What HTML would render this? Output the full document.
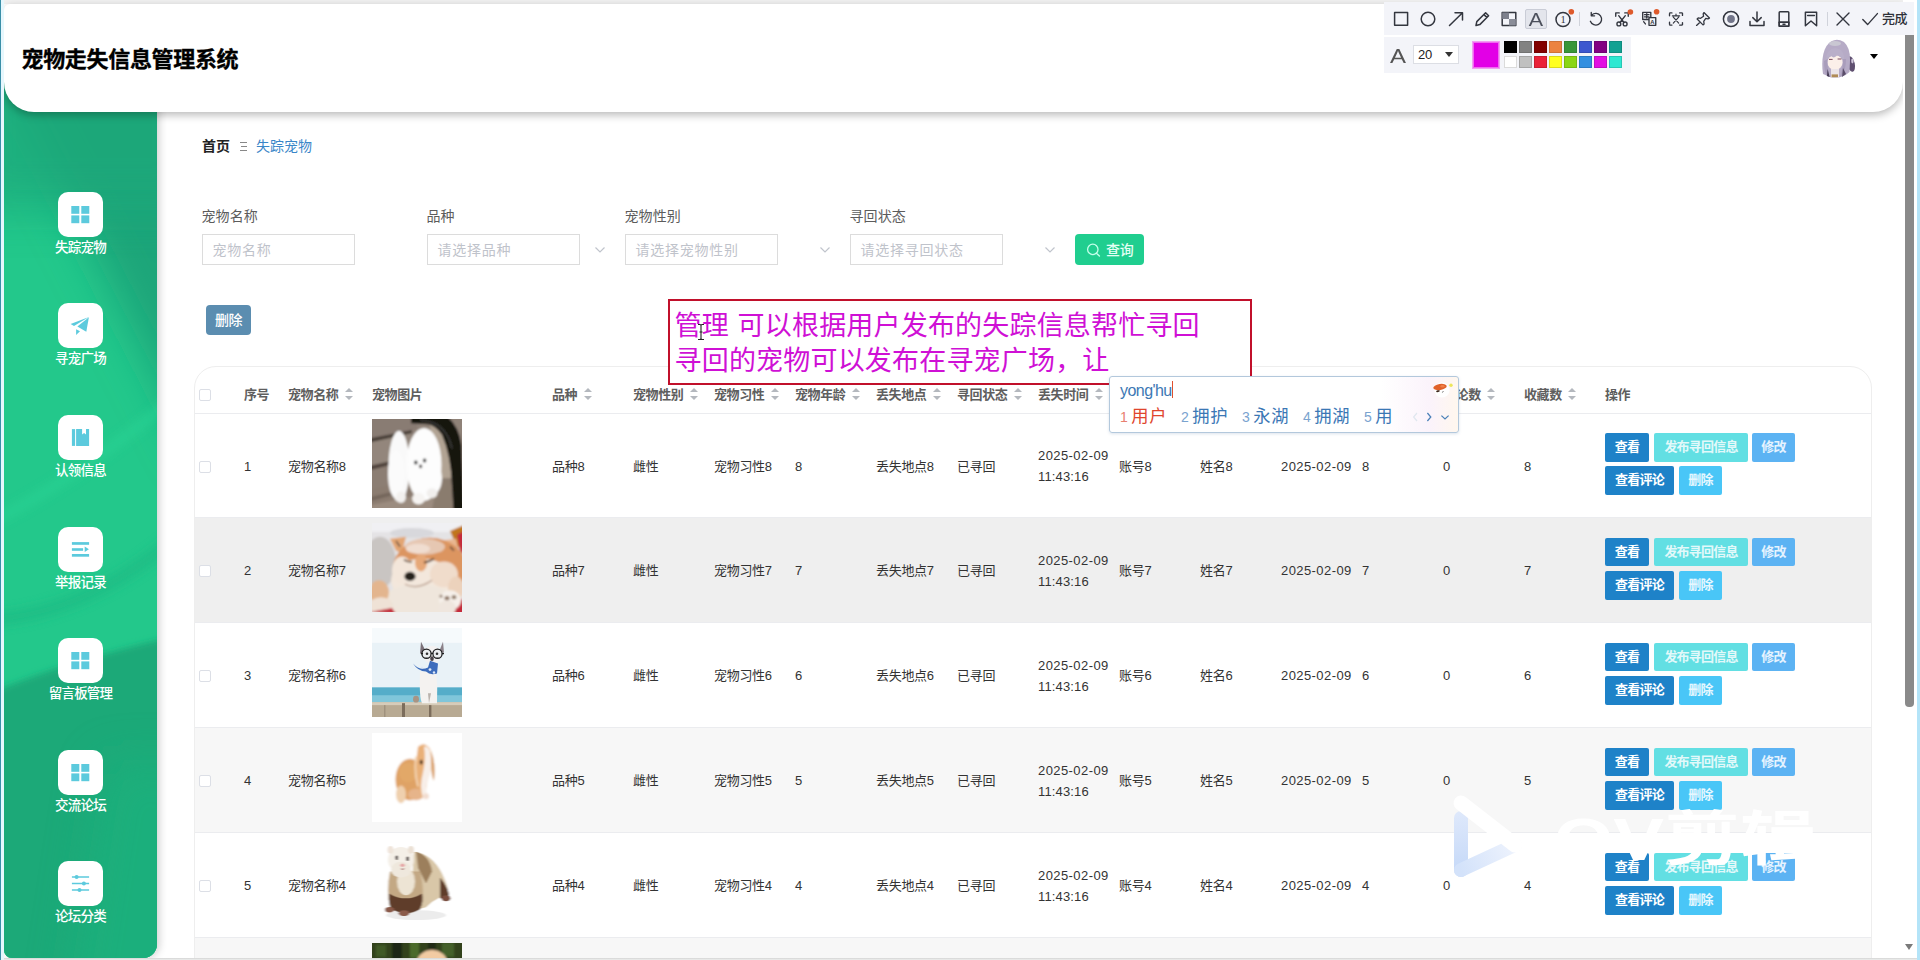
<!DOCTYPE html><html lang="zh-CN"><head><meta charset="utf-8"><title>宠物走失信息管理系统</title><style>
*{box-sizing:border-box;margin:0;padding:0}
html,body{width:1920px;height:960px;overflow:hidden;background:#fff}
body{position:relative;font-family:"Liberation Sans","Noto Sans CJK SC",sans-serif;font-size:13px;color:#333}
.abs{position:absolute}
#edgeL{left:0;top:0;width:1px;height:960px;background:#3a8fa8}
#edgeL2{left:1px;top:0;width:3px;height:960px;background:#e6f7fd}
#edgeT{left:0;top:0;width:1920px;height:4px;background:#f1f1f1}
#edgeR{left:1917px;top:0;width:3px;height:960px;background:#b4e4f8}
#edgeB{left:0;top:958px;width:1920px;height:2px;background:linear-gradient(#d4d4d4,#eef0ef)}
#side{left:4px;top:60px;width:153px;height:898px;border-radius:0 0 14px 8px;overflow:hidden;background:#22c68a}
#sideSh{left:4px;top:60px;width:153px;height:898px;border-radius:0 0 14px 8px;box-shadow:2px 0 8px rgba(0,0,0,.2)}
#head{left:4px;top:4px;width:1899px;height:108px;background:#fff;border-radius:6px 0 30px 30px;box-shadow:0 3px 8px rgba(0,0,0,.28)}
#title{left:21.5px;top:45px;font-size:22px;font-weight:bold;color:#000;line-height:30px;white-space:nowrap;letter-spacing:-.32px;-webkit-text-stroke:.35px #000}
.mi{position:absolute;left:4px;width:153px;text-align:center;color:#fff;font-weight:500;font-size:13.5px;line-height:16px;white-space:nowrap;letter-spacing:-.8px;text-indent:-.8px}
.mi .ib{display:block;width:45px;height:45px;border-radius:10px;background:#fff;margin:0 auto 3px;position:relative}
.mi svg{position:absolute;left:0;top:0}
#bc{left:202px;top:137px;font-size:14px;line-height:18px;white-space:nowrap}
#bc b{color:#222;font-weight:bold}
#bc .sep{display:inline-block;width:7px;height:9px;margin:0 9px 0 10px;border-top:1px solid #888;border-bottom:1px solid #888;position:relative;vertical-align:0}#bc .sep:after{content:"";position:absolute;left:1px;right:0;top:3px;border-top:1px solid #888}
#bc .cur{color:#3a86c8}
.fl{position:absolute;font-size:14px;color:#5c5c5c;line-height:18px;white-space:nowrap;letter-spacing:.1px;margin-left:-.5px}
.fi{position:absolute;top:234px;width:153px;height:31px;border:1px solid #dcdcdc;background:#fff;font-size:14px;color:#bfc3cb;line-height:31px;padding-left:9.5px;letter-spacing:.75px;white-space:nowrap}
.car{position:absolute;top:244px;width:12px;height:12px}
#qbtn{left:1075px;top:234px;width:69px;height:31px;border-radius:4px;background:#20ce8f;color:#e4fff4;font-size:14px;line-height:32px;white-space:nowrap;font-weight:500;letter-spacing:-.3px}
#del{left:206px;top:305px;width:45px;height:30px;border-radius:4px;background:#5b8db0;color:#fff;font-size:14px;font-weight:500;line-height:30px;text-align:center;letter-spacing:-.5px}
#tbl{left:194px;top:366px;width:1678px;height:600px;border:1px solid #eee;border-radius:22px 22px 0 0;overflow:hidden;background:#fff}
.row{position:absolute;left:0;width:1678px}
.c{position:absolute;white-space:nowrap;font-size:13px;line-height:22px;color:#333;letter-spacing:-.3px}
.h{font-weight:bold;color:#5e5e5e;letter-spacing:-.4px;margin-top:.6px}
.cb{position:absolute;left:4px;width:12px;height:12px;border:1px solid #dcdfe6;background:#fff;border-radius:2px}
.srt{display:inline-block;position:relative;width:8px;height:14px;vertical-align:-3.6px;margin-left:6.5px}
.srt:before{content:"";position:absolute;left:0;top:.3px;border:4.3px solid transparent;border-bottom:4.2px solid #b4b8be;border-top:0}
.srt:after{content:"";position:absolute;left:0;top:8.3px;border:4.3px solid transparent;border-top:4.2px solid #b4b8be;border-bottom:0}
.btn{position:absolute;height:28.7px;line-height:28.7px;color:#fff;font-size:13px;text-align:center;border-radius:2px;white-space:nowrap;letter-spacing:-.8px;font-weight:bold}
.b1{background:#1e82c8}.b2{background:#62dfe3;color:#e2f9fa}.b3{background:#5cb3f3;color:#e6f3ff}.b4{background:#49c6f7;color:#e6f8ff}
.d{letter-spacing:.42px}.t{letter-spacing:.15px}
</style></head><body>
<div id="edgeT" class="abs"></div>
<div id="sideSh" class="abs"></div><div id="side" class="abs"><svg width="153" height="898" viewBox="0 0 153 898" preserveAspectRatio="none" style="display:block"><defs><filter id="sb1" x="-30%" y="-30%" width="160%" height="160%"><feGaussianBlur stdDeviation="22"/></filter><filter id="sb2" x="-30%" y="-30%" width="160%" height="160%"><feGaussianBlur stdDeviation="5"/></filter><filter id="sb3" x="-30%" y="-30%" width="160%" height="160%"><feGaussianBlur stdDeviation="3"/></filter></defs><rect width="153" height="898" fill="#23c88b"/><path d="M-40 -100 H200 V407 L-40 -59 Z" fill="#1ba579" filter="url(#sb1)"/><rect x="-40" y="-40" width="240" height="190" fill="#1ca87a" opacity=".75" filter="url(#sb1)"/><path d="M-30 470 Q60 430 180 330" stroke="#2ad596" stroke-width="10" fill="none" opacity=".55" filter="url(#sb2)"/><path d="M-30 560 Q80 560 180 470" stroke="#1fbb84" stroke-width="14" fill="none" opacity=".7" filter="url(#sb2)"/><path d="M-30 640 Q60 600 190 572 V960 H-30 Z" fill="#1ba978" filter="url(#sb3)"/><path d="M100 700 H200 V960 H60 Z" fill="#1fb47f" opacity=".6" filter="url(#sb1)"/></svg></div>
<div class="mi" style="top:192px"><span class="ib"><svg width="45" height="45" viewBox="0 0 45 45"><g fill="#5ccadd"><rect x="13.3" y="14" width="8" height="7.8"/><rect x="23.3" y="14" width="8" height="7.8"/><rect x="13.3" y="23.4" width="8" height="7.8"/><rect x="23.3" y="23.4" width="8" height="7.8"/></g></svg></span>失踪宠物</div>
<div class="mi" style="top:303px"><span class="ib"><svg width="45" height="45" viewBox="0 0 45 45"><g fill="#5ccadd"><path d="M12.6 21 L30.9 13.9 L16 22.9 Z"/><path d="M19.4 23.6 L30.9 14.2 L28.3 28.8 Z"/><path d="M18.1 26.2 L22 28.3 L18.1 31.9 Z"/></g></svg></span>寻宠广场</div>
<div class="mi" style="top:415px"><span class="ib"><svg width="45" height="45" viewBox="0 0 45 45"><g fill="#5ccadd"><path d="M13.9 14.1 h3.2 v16.8 h-3.2 z"/><path d="M18.1 14.1 h6 v5.3 l1.95 -1.4 l1.95 1.4 v-5.3 h3.1 v16.8 h-13 z"/></g></svg></span>认领信息</div>
<div class="mi" style="top:527px"><span class="ib"><svg width="45" height="45" viewBox="0 0 45 45"><g fill="#5ccadd"><rect x="13.9" y="15.1" width="17.2" height="2.7"/><rect x="13.9" y="21.2" width="11.2" height="2.6"/><path d="M26.7 19.4 L30.9 22.3 L26.7 25 z"/><rect x="13.9" y="27" width="17.2" height="2.7"/></g></svg></span>举报记录</div>
<div class="mi" style="top:638px"><span class="ib"><svg width="45" height="45" viewBox="0 0 45 45"><g fill="#5ccadd"><rect x="13.3" y="14" width="8" height="7.8"/><rect x="23.3" y="14" width="8" height="7.8"/><rect x="13.3" y="23.4" width="8" height="7.8"/><rect x="23.3" y="23.4" width="8" height="7.8"/></g></svg></span>留言板管理</div>
<div class="mi" style="top:750px"><span class="ib"><svg width="45" height="45" viewBox="0 0 45 45"><g fill="#5ccadd"><rect x="13.3" y="14" width="8" height="7.8"/><rect x="23.3" y="14" width="8" height="7.8"/><rect x="13.3" y="23.4" width="8" height="7.8"/><rect x="23.3" y="23.4" width="8" height="7.8"/></g></svg></span>交流论坛</div>
<div class="mi" style="top:861px"><span class="ib"><svg width="45" height="45" viewBox="0 0 45 45"><g stroke="#5ccadd" stroke-width="1.5" fill="#5ccadd"><path d="M13.9 15.9 H31.1 M13.9 22.4 H31.1 M13.9 28.9 H31.1"/><circle cx="18.6" cy="15.9" r="2" stroke="none"/><circle cx="25.9" cy="22.4" r="2" stroke="none"/><circle cx="21.5" cy="28.9" r="2" stroke="none"/></g></svg></span>论坛分类</div>
<div id="head" class="abs"></div><div id="title" class="abs">宠物走失信息管理系统</div>
<div id="bc" class="abs"><b>首页</b><span class="sep"></span><span class="cur">失踪宠物</span></div>
<div class="fl" style="left:202px;top:207px">宠物名称</div>
<div class="fi" style="left:202px">宠物名称</div>
<div class="fl" style="left:427px;top:207px">品种</div>
<div class="fi" style="left:427px">请选择品种</div>
<svg class="car" style="left:594px" viewBox="0 0 12 12"><path d="M1.5 3.5 L6 8 L10.5 3.5" fill="none" stroke="#c0c4cc" stroke-width="1.2"/></svg>
<div class="fl" style="left:625px;top:207px">宠物性别</div>
<div class="fi" style="left:625px">请选择宠物性别</div>
<svg class="car" style="left:819px" viewBox="0 0 12 12"><path d="M1.5 3.5 L6 8 L10.5 3.5" fill="none" stroke="#c0c4cc" stroke-width="1.2"/></svg>
<div class="fl" style="left:850px;top:207px">寻回状态</div>
<div class="fi" style="left:850px">请选择寻回状态</div>
<svg class="car" style="left:1044px" viewBox="0 0 12 12"><path d="M1.5 3.5 L6 8 L10.5 3.5" fill="none" stroke="#c0c4cc" stroke-width="1.2"/></svg>
<div id="qbtn" class="abs"><svg class="abs" style="left:11px;top:8px" width="15" height="15" viewBox="0 0 15 15"><circle cx="6.8" cy="7.4" r="5.2" fill="none" stroke="#c4ffea" stroke-width="1.3"/><path d="M10.4 11.2 L13.4 14" stroke="#c4ffea" stroke-width="1.4" stroke-linecap="round"/></svg><span class="abs" style="left:31px;top:0">查询</span></div>
<div id="del" class="abs">删除</div>
<div id="tbl" class="abs">
<div class="row" style="top:0;height:47px;border-bottom:1px solid #ebecef">
<span class="cb" style="top:22px"></span>
<span class="c h" style="left:49px;top:16px">序号</span>
<span class="c h" style="left:93px;top:16px">宠物名称<i class="srt"></i></span>
<span class="c h" style="left:177px;top:16px">宠物图片</span>
<span class="c h" style="left:357px;top:16px">品种<i class="srt"></i></span>
<span class="c h" style="left:438px;top:16px">宠物性别<i class="srt"></i></span>
<span class="c h" style="left:519px;top:16px">宠物习性<i class="srt"></i></span>
<span class="c h" style="left:600px;top:16px">宠物年龄<i class="srt"></i></span>
<span class="c h" style="left:681px;top:16px">丢失地点<i class="srt"></i></span>
<span class="c h" style="left:762px;top:16px">寻回状态<i class="srt"></i></span>
<span class="c h" style="left:843px;top:16px">丢失时间<i class="srt"></i></span>
<span class="c h" style="left:924px;top:16px">账号<i class="srt"></i></span>
<span class="c h" style="left:1005px;top:16px">姓名<i class="srt"></i></span>
<span class="c h" style="left:1086px;top:16px">寻回时间<i class="srt"></i></span>
<span class="c h" style="left:1167px;top:16px">点击<i class="srt"></i></span>
<span class="c h" style="left:1248px;top:16px">评论数<i class="srt"></i></span>
<span class="c h" style="left:1329px;top:16px">收藏数<i class="srt"></i></span>
<span class="c h" style="left:1410px;top:16px">操作</span>
</div>
<div class="row" style="top:47px;height:104px;background:#fff;border-bottom:1px solid #ebecef">
<span class="cb" style="top:46.5px"></span>
<span class="c" style="left:49px;top:41.5px">1</span>
<span class="c" style="left:93px;top:41.5px">宠物名称8</span>
<span class="c" style="left:357px;top:41.5px">品种8</span>
<span class="c" style="left:438px;top:41.5px">雌性</span>
<span class="c" style="left:519px;top:41.5px">宠物习性8</span>
<span class="c" style="left:600px;top:41.5px">8</span>
<span class="c" style="left:681px;top:41.5px">丢失地点8</span>
<span class="c" style="left:762px;top:41.5px">已寻回</span>
<span class="c" style="left:924px;top:41.5px">账号8</span>
<span class="c" style="left:1005px;top:41.5px">姓名8</span>
<span class="c" style="left:1086px;top:41.5px"><span class="d">2025-02-09</span></span>
<span class="c" style="left:1167px;top:41.5px">8</span>
<span class="c" style="left:1248px;top:41.5px">0</span>
<span class="c" style="left:1329px;top:41.5px">8</span>
<span class="c" style="left:843px;top:31.3px;line-height:21px"><span class="d">2025-02-09</span><br><span class="t">11:43:16</span></span>
<div class="abs" style="left:177px;top:5px;width:90px;height:90px;overflow:hidden"><svg width="90" height="89" viewBox="0 0 90 90" preserveAspectRatio="none" style="display:block"><defs><filter id="bl1" x="-5%" y="-5%" width="110%" height="110%"><feGaussianBlur stdDeviation="0.9"/></filter><clipPath id="cp1"><rect width="90" height="90"/></clipPath></defs><g clip-path="url(#cp1)"><g filter="url(#bl1)">
<rect x="-5" y="-5" width="100" height="100" fill="#8f8278"/>
<path d="M-5 -5 H45 V10 L-5 20 Z" fill="#897c73"/>
<path d="M-5 20 L40 11 V14.5 L-5 24.5 Z" fill="#4a3f39"/>
<path d="M-5 24.5 L40 14.5 L40 38 L-5 48 Z" fill="#93867b"/>
<path d="M-5 48 L30 40 V44 L-5 52.5 Z" fill="#51453e"/>
<path d="M-5 52.5 L30 44 L30 64 L-5 72 Z" fill="#8c7e73"/>
<path d="M-5 72 L30 64 L95 68 V95 H-5 Z" fill="#8b7c70"/>
<path d="M-5 80 L34 70 L36 73 L-5 84 Z" fill="#74665c"/>
<path d="M-5 88 L60 74 L95 80 V95 H-5Z" fill="#9b8c7f"/>
<path d="M58 6 L72 14 L80 40 L82 72 L66 72 Z" fill="#b1a393"/>
<path d="M66 60 L82 60 L84 92 L60 92 Z" fill="#8a7b6e"/>
<path d="M39 -2 L76 -2 Q87 8 89.5 26 L92 92 L81.5 92 L80 68 Q79 37 70 16 Q63 6 56 5.4 L39 4.4 Z" fill="#15130f"/>
<path d="M48 1.5 Q74 2 80 30" fill="none" stroke="#3c3c3a" stroke-width="1.6"/>
<ellipse cx="27" cy="48" rx="10.5" ry="36" fill="#f9f9f9"/>
<ellipse cx="24" cy="56" rx="8" ry="24" fill="#fbfbfb"/>
<ellipse cx="52" cy="46" rx="17.5" ry="37" fill="#fdfdfd"/>
<ellipse cx="55" cy="60" rx="15" ry="20" fill="#fdfdfd"/>
<ellipse cx="29" cy="79" rx="5" ry="6" fill="#f3f1ef"/>
<ellipse cx="46.5" cy="80.5" rx="6.4" ry="6" fill="#f6f4f2"/>
<ellipse cx="60" cy="75" rx="5.4" ry="5" fill="#f1efed"/>
<ellipse cx="43.8" cy="44" rx="1.7" ry="2.1" fill="#1e1e1e"/>
<ellipse cx="52.6" cy="42" rx="1.7" ry="2.1" fill="#1e1e1e"/>
<ellipse cx="48.6" cy="47.8" rx="1.5" ry="1.9" fill="#2a2222"/>
</g></g></svg></div>
<span class="btn b1" style="left:1410px;top:19.2px;width:44px">查看</span>
<span class="btn b2" style="left:1459px;top:19.2px;width:94px">发布寻回信息</span>
<span class="btn b3" style="left:1557px;top:19.2px;width:43px">修改</span>
<span class="btn b1" style="left:1410px;top:52.4px;width:69px">查看评论</span>
<span class="btn b4" style="left:1484px;top:52.4px;width:43px">删除</span>
</div>
<div class="row" style="top:151px;height:105px;background:#efefef;border-bottom:1px solid #ebecef">
<span class="cb" style="top:47.0px"></span>
<span class="c" style="left:49px;top:42.0px">2</span>
<span class="c" style="left:93px;top:42.0px">宠物名称7</span>
<span class="c" style="left:357px;top:42.0px">品种7</span>
<span class="c" style="left:438px;top:42.0px">雌性</span>
<span class="c" style="left:519px;top:42.0px">宠物习性7</span>
<span class="c" style="left:600px;top:42.0px">7</span>
<span class="c" style="left:681px;top:42.0px">丢失地点7</span>
<span class="c" style="left:762px;top:42.0px">已寻回</span>
<span class="c" style="left:924px;top:42.0px">账号7</span>
<span class="c" style="left:1005px;top:42.0px">姓名7</span>
<span class="c" style="left:1086px;top:42.0px"><span class="d">2025-02-09</span></span>
<span class="c" style="left:1167px;top:42.0px">7</span>
<span class="c" style="left:1248px;top:42.0px">0</span>
<span class="c" style="left:1329px;top:42.0px">7</span>
<span class="c" style="left:843px;top:31.8px;line-height:21px"><span class="d">2025-02-09</span><br><span class="t">11:43:16</span></span>
<div class="abs" style="left:177px;top:5px;width:90px;height:90px;overflow:hidden"><svg width="90" height="89" viewBox="0 0 90 90" preserveAspectRatio="none" style="display:block"><defs><filter id="bl2" x="-5%" y="-5%" width="110%" height="110%"><feGaussianBlur stdDeviation="1.3"/></filter><clipPath id="cp2"><rect width="90" height="90"/></clipPath></defs><g clip-path="url(#cp2)"><g filter="url(#bl2)">
<rect x="-5" y="-5" width="100" height="100" fill="#e4e3e5"/>
<rect x="-5" y="-5" width="100" height="14" fill="#f0f0f3"/>
<ellipse cx="8" cy="40" rx="16" ry="26" fill="#c9c5c2"/>
<ellipse cx="40" cy="10" rx="22" ry="5" fill="#d8d8dc"/>
<path d="M78 8 L92 2 V30 L84 22 Z" fill="#c0761e"/>
<path d="M85 12 L92 8 V32 L88 28 Z" fill="#c42a3a"/><path d="M81 82 L92 76 V94 H76 Z" fill="#c42a3a"/>
<path d="M18 16 L34 14 L30 30 L24 28 Z" fill="#e3a673"/>
<path d="M68 18 L84 16 L88 34 L74 30 Z" fill="#e9b690"/>
<ellipse cx="58" cy="46" rx="37" ry="31" fill="#dc9560"/>
<ellipse cx="53" cy="24" rx="20" ry="8" fill="#e6c7b2"/><ellipse cx="46" cy="26" rx="12" ry="5" fill="#f0ddd0"/>
<ellipse cx="50" cy="58" rx="31" ry="22" fill="#f3e7dc"/>
<ellipse cx="30" cy="48" rx="10" ry="14" fill="#f3e6da"/>
<ellipse cx="72" cy="52" rx="14" ry="13" fill="#f0dccb"/><ellipse cx="84" cy="66" rx="8" ry="12" fill="#ecd2bc"/>
<ellipse cx="49" cy="40" rx="6" ry="9" fill="#e6a878"/>
<ellipse cx="46" cy="80" rx="36" ry="18" fill="#efe6dc"/>
<ellipse cx="7" cy="70" rx="10" ry="12" fill="#e3b58e"/>
<ellipse cx="9" cy="84" rx="12" ry="9" fill="#efe2d6"/>
<path d="M32 37 Q36 40 40 39" stroke="#5a3a22" stroke-width="1.6" fill="none"/>
<path d="M52 40 Q58 39 62 36" stroke="#4a3020" stroke-width="1.8" fill="none"/>
<ellipse cx="38" cy="54" rx="5.6" ry="4.6" fill="#25221f"/>
<path d="M33 62 Q46 68 60 58" stroke="#b79a88" stroke-width="1.2" fill="none"/>
<ellipse cx="78" cy="78" rx="11" ry="10" fill="#f6f0ea"/>
<ellipse cx="75" cy="86" rx="9" ry="8" fill="#efe6de"/>
<ellipse cx="75" cy="76" rx="2.6" ry="2.2" fill="#8f7766"/>
<ellipse cx="82" cy="75" rx="2.4" ry="2.2" fill="#95806e"/>
<ellipse cx="69" cy="74" rx="1.6" ry="1.6" fill="#9a8878"/>
<path d="M-2 90 L20 86 L24 92 Z" fill="#c42a3a"/>
<path d="M24 18 l4 6" stroke="#6a5040" stroke-width="1.5"/>
<path d="M78 24 l4 4" stroke="#6a5040" stroke-width="1.8"/>
</g></g></svg></div>
<span class="btn b1" style="left:1410px;top:19.7px;width:44px">查看</span>
<span class="btn b2" style="left:1459px;top:19.7px;width:94px">发布寻回信息</span>
<span class="btn b3" style="left:1557px;top:19.7px;width:43px">修改</span>
<span class="btn b1" style="left:1410px;top:52.9px;width:69px">查看评论</span>
<span class="btn b4" style="left:1484px;top:52.9px;width:43px">删除</span>
</div>
<div class="row" style="top:256px;height:105px;background:#fff;border-bottom:1px solid #ebecef">
<span class="cb" style="top:47.0px"></span>
<span class="c" style="left:49px;top:42.0px">3</span>
<span class="c" style="left:93px;top:42.0px">宠物名称6</span>
<span class="c" style="left:357px;top:42.0px">品种6</span>
<span class="c" style="left:438px;top:42.0px">雌性</span>
<span class="c" style="left:519px;top:42.0px">宠物习性6</span>
<span class="c" style="left:600px;top:42.0px">6</span>
<span class="c" style="left:681px;top:42.0px">丢失地点6</span>
<span class="c" style="left:762px;top:42.0px">已寻回</span>
<span class="c" style="left:924px;top:42.0px">账号6</span>
<span class="c" style="left:1005px;top:42.0px">姓名6</span>
<span class="c" style="left:1086px;top:42.0px"><span class="d">2025-02-09</span></span>
<span class="c" style="left:1167px;top:42.0px">6</span>
<span class="c" style="left:1248px;top:42.0px">0</span>
<span class="c" style="left:1329px;top:42.0px">6</span>
<span class="c" style="left:843px;top:31.8px;line-height:21px"><span class="d">2025-02-09</span><br><span class="t">11:43:16</span></span>
<div class="abs" style="left:177px;top:5px;width:90px;height:90px;overflow:hidden"><svg width="90" height="89" viewBox="0 0 90 90" preserveAspectRatio="none" style="display:block"><defs><filter id="bl3" x="-5%" y="-5%" width="110%" height="110%"><feGaussianBlur stdDeviation="0.6"/></filter><clipPath id="cp3"><rect width="90" height="90"/></clipPath></defs><g clip-path="url(#cp3)"><g filter="url(#bl3)">
<rect x="-5" y="-5" width="100" height="100" fill="#e9f2f7"/>
<rect x="-5" y="-5" width="100" height="20" fill="#f6fafc"/>
<rect x="-5" y="60" width="100" height="16" fill="#55adc9"/>
<rect x="-5" y="68" width="100" height="9" fill="#80c6da"/>
<rect x="-5" y="75" width="100" height="20" fill="#b8aa93"/>
<rect x="-5" y="75" width="100" height="3" fill="#d6ccba"/>
<rect x="30" y="76" width="3" height="16" fill="#7c6d5b"/>
<rect x="57" y="78" width="2.4" height="14" fill="#7c6d5b"/>
<rect x="12" y="78" width="1.5" height="12" fill="#a0927e"/>
<path d="M49 14 L54 24 L48 26 Z" fill="#7a7078"/>
<path d="M71 14 L67 24 L72 25 Z" fill="#8a8088"/>
<ellipse cx="60" cy="27" rx="9" ry="9" fill="#f3f1f1"/>
<path d="M48 44 Q47 70 50 76 H65 Q66 60 64 44 Z" fill="#f4f2f0"/>
<ellipse cx="44" cy="72" rx="3" ry="3.4" fill="#a89484"/>
<path d="M56 66 L57 76 L59 66 Z" fill="#b9b2ac"/>
<path d="M41 36 Q48 44 56 40 L58 33 L66 36 L65 46 Q58 48 54 44 Q46 44 41 36Z" fill="#3c6cbc"/>
<circle cx="58" cy="42" r="1.4" fill="#dfe8f6"/><circle cx="62" cy="45" r="1.2" fill="#dfe8f6"/><circle cx="50" cy="40" r="1" fill="#dfe8f6"/>
<circle cx="54.5" cy="26" r="4.6" fill="#eceef0" stroke="#1c1c1e" stroke-width="1.3"/>
<circle cx="65.5" cy="26" r="4.6" fill="#eceef0" stroke="#1c1c1e" stroke-width="1.3"/>
<path d="M49 26 h2 M70 26 h2 M59 25.6 h2" stroke="#1c1c1e" stroke-width="1.2"/>
<circle cx="55" cy="26" r="1.3" fill="#333"/><circle cx="65" cy="26" r="1.3" fill="#333"/>
<ellipse cx="60" cy="31" rx="1.8" ry="2.4" fill="#4a4248"/>
</g></g></svg></div>
<span class="btn b1" style="left:1410px;top:19.7px;width:44px">查看</span>
<span class="btn b2" style="left:1459px;top:19.7px;width:94px">发布寻回信息</span>
<span class="btn b3" style="left:1557px;top:19.7px;width:43px">修改</span>
<span class="btn b1" style="left:1410px;top:52.9px;width:69px">查看评论</span>
<span class="btn b4" style="left:1484px;top:52.9px;width:43px">删除</span>
</div>
<div class="row" style="top:361px;height:105px;background:#f7f7f7;border-bottom:1px solid #ebecef">
<span class="cb" style="top:47.0px"></span>
<span class="c" style="left:49px;top:42.0px">4</span>
<span class="c" style="left:93px;top:42.0px">宠物名称5</span>
<span class="c" style="left:357px;top:42.0px">品种5</span>
<span class="c" style="left:438px;top:42.0px">雌性</span>
<span class="c" style="left:519px;top:42.0px">宠物习性5</span>
<span class="c" style="left:600px;top:42.0px">5</span>
<span class="c" style="left:681px;top:42.0px">丢失地点5</span>
<span class="c" style="left:762px;top:42.0px">已寻回</span>
<span class="c" style="left:924px;top:42.0px">账号5</span>
<span class="c" style="left:1005px;top:42.0px">姓名5</span>
<span class="c" style="left:1086px;top:42.0px"><span class="d">2025-02-09</span></span>
<span class="c" style="left:1167px;top:42.0px">5</span>
<span class="c" style="left:1248px;top:42.0px">0</span>
<span class="c" style="left:1329px;top:42.0px">5</span>
<span class="c" style="left:843px;top:31.8px;line-height:21px"><span class="d">2025-02-09</span><br><span class="t">11:43:16</span></span>
<div class="abs" style="left:177px;top:5px;width:90px;height:90px;overflow:hidden"><svg width="90" height="89" viewBox="0 0 90 90" preserveAspectRatio="none" style="display:block"><defs><filter id="bl4" x="-5%" y="-5%" width="110%" height="110%"><feGaussianBlur stdDeviation="0.9"/></filter><clipPath id="cp4"><rect width="90" height="90"/></clipPath></defs><g clip-path="url(#cp4)"><g filter="url(#bl4)">
<rect x="-5" y="-5" width="100" height="100" fill="#ffffff"/>
<ellipse cx="38" cy="47" rx="14.5" ry="21" fill="#dfa265"/>
<ellipse cx="36" cy="40" rx="9" ry="10" fill="#e2a868"/>
<ellipse cx="29" cy="62" rx="5" ry="9" fill="#efd0ae"/>
<ellipse cx="44" cy="62" rx="8" ry="6" fill="#e6b48a"/>
<path d="M46 14 Q52 8 58 16 Q62 30 56 46 Q52 62 56 66 Q50 68 48 60 Q42 40 46 14Z" fill="#e9b078"/>
<path d="M52 14 Q58 12 59 24 Q60 40 55 50 Q53 60 56 66 L51 66 Q47 54 51 40 Q54 26 52 14Z" fill="#f8efe9"/>
<path d="M59 18 Q64 30 62 48 Q60 46 59.4 36 Z" fill="#d79a5c"/>
<ellipse cx="49.2" cy="29.5" rx="1.5" ry="2.4" fill="#3a2014"/>
<ellipse cx="54" cy="64" rx="3" ry="3" fill="#f2ddd0"/>
<path d="M44 24 Q42 40 46 54" stroke="#f3d3b0" stroke-width="2" fill="none"/>
</g></g></svg></div>
<span class="btn b1" style="left:1410px;top:19.7px;width:44px">查看</span>
<span class="btn b2" style="left:1459px;top:19.7px;width:94px">发布寻回信息</span>
<span class="btn b3" style="left:1557px;top:19.7px;width:43px">修改</span>
<span class="btn b1" style="left:1410px;top:52.9px;width:69px">查看评论</span>
<span class="btn b4" style="left:1484px;top:52.9px;width:43px">删除</span>
</div>
<div class="row" style="top:466px;height:105px;background:#fff;border-bottom:1px solid #ebecef">
<span class="cb" style="top:47.0px"></span>
<span class="c" style="left:49px;top:42.0px">5</span>
<span class="c" style="left:93px;top:42.0px">宠物名称4</span>
<span class="c" style="left:357px;top:42.0px">品种4</span>
<span class="c" style="left:438px;top:42.0px">雌性</span>
<span class="c" style="left:519px;top:42.0px">宠物习性4</span>
<span class="c" style="left:600px;top:42.0px">4</span>
<span class="c" style="left:681px;top:42.0px">丢失地点4</span>
<span class="c" style="left:762px;top:42.0px">已寻回</span>
<span class="c" style="left:924px;top:42.0px">账号4</span>
<span class="c" style="left:1005px;top:42.0px">姓名4</span>
<span class="c" style="left:1086px;top:42.0px"><span class="d">2025-02-09</span></span>
<span class="c" style="left:1167px;top:42.0px">4</span>
<span class="c" style="left:1248px;top:42.0px">0</span>
<span class="c" style="left:1329px;top:42.0px">4</span>
<span class="c" style="left:843px;top:31.8px;line-height:21px"><span class="d">2025-02-09</span><br><span class="t">11:43:16</span></span>
<div class="abs" style="left:177px;top:5px;width:90px;height:90px;overflow:hidden"><svg width="90" height="89" viewBox="0 0 90 90" preserveAspectRatio="none" style="display:block"><defs><filter id="bl5" x="-5%" y="-5%" width="110%" height="110%"><feGaussianBlur stdDeviation="0.8"/></filter><clipPath id="cp5"><rect width="90" height="90"/></clipPath></defs><g clip-path="url(#cp5)"><g filter="url(#bl5)">
<rect x="-5" y="-5" width="100" height="100" fill="#ffffff"/>
<g transform="translate(-2 -6)">
<ellipse cx="46" cy="84" rx="30" ry="5" fill="#ececec"/>
<path d="M44 20 Q62 22 72 42 Q80 58 78 66 L70 66 Q62 70 56 76 L40 80 Z" fill="#d9c7a8"/>
<path d="M46 20 Q60 24 62 40 L56 52 L48 36 Z" fill="#9c7f5c"/>
<path d="M70 46 Q80 58 79 67 L70 67 Z" fill="#5e3d2c"/>
<ellipse cx="76" cy="67" rx="4.4" ry="3" fill="#7a4e3c"/>
<path d="M20 40 Q16 60 20 76 Q36 86 50 78 Q56 62 50 40 Z" fill="#c3a884"/>
<path d="M19 62 Q18 74 22 78 Q36 86 50 78 Q54 70 52 62 Q36 72 19 62Z" fill="#5f3e2c"/>
<ellipse cx="36" cy="50" rx="9" ry="14" fill="#ede4d4"/>
<ellipse cx="31" cy="28" rx="13" ry="13" fill="#f4efe7"/>
<ellipse cx="31" cy="38" rx="10" ry="8" fill="#efe8dd"/>
<ellipse cx="20.5" cy="18" rx="3" ry="4" fill="#efe4da"/>
<ellipse cx="41" cy="18" rx="3" ry="4" fill="#ebe0d4"/>
<ellipse cx="26.8" cy="26" rx="1.3" ry="2.2" fill="#2a1c1c"/>
<ellipse cx="37.6" cy="27" rx="1.3" ry="2.2" fill="#2a1c1c"/>
<ellipse cx="32.5" cy="33.5" rx="2.2" ry="1.8" fill="#e6a6a6"/>
<path d="M31 37 q1.6 1.6 3.2 0" stroke="#9a5a5a" stroke-width="1" fill="none"/>
<ellipse cx="19.5" cy="78.5" rx="4.6" ry="2.8" fill="#8a5a4a"/>
<ellipse cx="34" cy="82" rx="5.4" ry="3" fill="#8a5a4a"/>
</g>
</g></g></svg></div>
<span class="btn b1" style="left:1410px;top:19.7px;width:44px">查看</span>
<span class="btn b2" style="left:1459px;top:19.7px;width:94px">发布寻回信息</span>
<span class="btn b3" style="left:1557px;top:19.7px;width:43px">修改</span>
<span class="btn b1" style="left:1410px;top:52.9px;width:69px">查看评论</span>
<span class="btn b4" style="left:1484px;top:52.9px;width:43px">删除</span>
</div>
<div class="row" style="top:571px;height:105px;background:#f7f7f7;border-bottom:1px solid #ebecef">
<span class="cb" style="top:47.0px"></span>
<span class="c" style="left:49px;top:42.0px">6</span>
<span class="c" style="left:93px;top:42.0px">宠物名称3</span>
<span class="c" style="left:357px;top:42.0px">品种3</span>
<span class="c" style="left:438px;top:42.0px">雌性</span>
<span class="c" style="left:519px;top:42.0px">宠物习性3</span>
<span class="c" style="left:600px;top:42.0px">3</span>
<span class="c" style="left:681px;top:42.0px">丢失地点3</span>
<span class="c" style="left:762px;top:42.0px">已寻回</span>
<span class="c" style="left:924px;top:42.0px">账号3</span>
<span class="c" style="left:1005px;top:42.0px">姓名3</span>
<span class="c" style="left:1086px;top:42.0px"><span class="d">2025-02-09</span></span>
<span class="c" style="left:1167px;top:42.0px">3</span>
<span class="c" style="left:1248px;top:42.0px">0</span>
<span class="c" style="left:1329px;top:42.0px">3</span>
<span class="c" style="left:843px;top:31.8px;line-height:21px"><span class="d">2025-02-09</span><br><span class="t">11:43:16</span></span>
<div class="abs" style="left:177px;top:5px;width:90px;height:90px;overflow:hidden"><svg width="90" height="89" viewBox="0 0 90 90" preserveAspectRatio="none" style="display:block"><defs><filter id="bl6" x="-5%" y="-5%" width="110%" height="110%"><feGaussianBlur stdDeviation="1.0"/></filter><clipPath id="cp6"><rect width="90" height="90"/></clipPath></defs><g clip-path="url(#cp6)"><g filter="url(#bl6)">
<rect x="-5" y="-5" width="100" height="100" fill="#33421f"/>
<rect x="20" y="-5" width="10" height="30" fill="#1d2613"/>
<rect x="56" y="-5" width="8" height="30" fill="#222b16"/>
<rect x="38" y="-5" width="9" height="20" fill="#4b6a2c"/>
<rect x="4" y="2" width="10" height="12" fill="#3f5a27"/>
<rect x="70" y="0" width="12" height="14" fill="#44602b"/>
<ellipse cx="60" cy="22" rx="16" ry="15" fill="#f2cba3"/>
</g></g></svg></div>
<span class="btn b1" style="left:1410px;top:19.7px;width:44px">查看</span>
<span class="btn b2" style="left:1459px;top:19.7px;width:94px">发布寻回信息</span>
<span class="btn b3" style="left:1557px;top:19.7px;width:43px">修改</span>
<span class="btn b1" style="left:1410px;top:52.9px;width:69px">查看评论</span>
<span class="btn b4" style="left:1484px;top:52.9px;width:43px">删除</span>
</div>
</div>
<div class="abs" style="left:1903px;top:0;width:14px;height:960px;background:#fff"></div>
<div class="abs" style="left:1905px;top:35px;width:8.5px;height:672px;background:#8a8a8a;border-radius:0 0 4px 4px"></div>
<div class="abs" style="left:1904.5px;top:944px;width:0;height:0;border:4.5px solid transparent;border-top:6px solid #7a7a7a;border-bottom:0"></div>
<svg class="abs" style="left:1819px;top:37px" width="40" height="42" viewBox="0 0 40 42">
<defs><filter id="avb" x="-10%" y="-10%" width="120%" height="120%"><feGaussianBlur stdDeviation=".55"/></filter></defs>
<g filter="url(#avb)">
<ellipse cx="32" cy="27" rx="3.8" ry="8" fill="#5f5070" transform="rotate(-12 32 27)"/>
<ellipse cx="33.4" cy="24" rx="1.2" ry="2.4" fill="#cfc6da"/>
<path d="M4 37 Q1.5 19 7.5 9 Q15 -1 25 5 Q31.5 11 31 24 L30.5 35 Q23 42 12 40.5 Z" fill="#b6abc6"/>
<ellipse cx="16" cy="6.5" rx="6" ry="2.6" fill="#c9c7d2"/>
<ellipse cx="16" cy="25.5" rx="7.6" ry="7.4" fill="#fbefe9"/>
<path d="M7 24 Q7 12 16 11 Q26 12 25 24 Q22 19 18 18.6 Q15 22 12 19 Q9 20 7 24Z" fill="#b9afc9"/>
<path d="M5 24 Q5 34 8 39 L11 40 Q8 32 8.5 22 Z" fill="#a99dbb"/>
<path d="M27 22 Q27 32 23 39 L21 39.6 Q24.4 31 24 22 Z" fill="#a99dbb"/>
<path d="M8.6 32 L10.6 40 L8 39 Z" fill="#463c56"/>
<path d="M24 31 L23 40 L27 37 Z" fill="#5a4e6a"/>
<path d="M12 32 h8 v8.5 h-8z" fill="#ebe4e8"/>
<rect x="12.6" y="37.4" width="6.4" height="2.8" fill="#b08c56"/>
<path d="M10 22.4 h3.6 M18.6 22 h3.8" stroke="#7a4a5e" stroke-width="1"/>
</g></svg>
<div class="abs" style="left:1870px;top:54.4px;width:0;height:0;border:4.6px solid transparent;border-top:5.8px solid #000;border-bottom:0"></div>
<div class="abs" style="left:1384px;top:2px;width:530px;height:33px;background:#f3f4f9"></div>
<div class="abs" style="left:1384px;top:37px;width:247px;height:36px;background:#f3f4f9"></div>
<div class="abs" style="left:1525px;top:9px;width:22px;height:20px;background:#e3e5ec;border:1px solid #c9ccd6;border-radius:2px"></div>
<svg class="abs" style="left:1391.0px;top:9.0px;overflow:visible" width="20" height="20" viewBox="0 0 20 20" fill="none" stroke="#33363f" stroke-width="1.5" stroke-linecap="round" stroke-linejoin="round"><rect x="3.6" y="3.6" width="13" height="12.6"/></svg>
<svg class="abs" style="left:1418.0px;top:9.0px;overflow:visible" width="20" height="20" viewBox="0 0 20 20" fill="none" stroke="#33363f" stroke-width="1.5" stroke-linecap="round" stroke-linejoin="round"><circle cx="10" cy="10" r="6.8"/></svg>
<svg class="abs" style="left:1446.0px;top:9.0px;overflow:visible" width="20" height="20" viewBox="0 0 20 20" fill="none" stroke="#33363f" stroke-width="1.5" stroke-linecap="round" stroke-linejoin="round"><path d="M3.5 16.5 L16.5 3.8 M9 3.8 H16.5 V11"/></svg>
<svg class="abs" style="left:1472.0px;top:9.0px;overflow:visible" width="20" height="20" viewBox="0 0 20 20" fill="none" stroke="#33363f" stroke-width="1.5" stroke-linecap="round" stroke-linejoin="round"><path d="M4 16.5 L4.8 12.6 L13.6 3.8 L16.6 6.8 L7.8 15.6 Z M12 5.6 L14.8 8.4"/></svg>
<svg class="abs" style="left:1499.0px;top:9.0px;overflow:visible" width="20" height="20" viewBox="0 0 20 20" fill="none" stroke="#33363f" stroke-width="1.5" stroke-linecap="round" stroke-linejoin="round"><rect x="3.2" y="3.5" width="13.6" height="13"/><rect x="3.2" y="3.5" width="6.8" height="6.5" fill="#7d808c" stroke="none"/><rect x="10" y="10" width="6.8" height="6.5" fill="#8a8d98" stroke="none"/></svg>
<div class="abs" style="left:1526px;top:6px;width:20px;height:26px;font-size:19px;line-height:27px;text-align:center;color:#4c505c;font-family:'Liberation Sans',sans-serif;transform:scaleX(1.13)">A</div>
<svg class="abs" style="left:1553.0px;top:9.0px;overflow:visible" width="20" height="20" viewBox="0 0 20 20" fill="none" stroke="#33363f" stroke-width="1.5" stroke-linecap="round" stroke-linejoin="round"><circle cx="10" cy="10.5" r="7"/><text x="10" y="14.3" font-size="10.5" text-anchor="middle" fill="#33363f" stroke="none" font-family="Liberation Serif,serif">1</text><circle cx="18.3" cy="2.8" r="2.8" fill="#de5a2c" stroke="none"/></svg>
<div class="abs" style="left:1579px;top:12px;width:1px;height:14px;background:#d0d3db"></div>
<svg class="abs" style="left:1586.0px;top:9.0px;overflow:visible" width="20" height="20" viewBox="0 0 20 20" fill="none" stroke="#33363f" stroke-width="1.5" stroke-linecap="round" stroke-linejoin="round"><g transform="translate(10 10) scale(0.88) translate(-10 -10)"><path d="M5.2 5.5 A6.6 6.6 0 1 1 3.6 12.6 M4.6 2.6 V6.4 H8.4"/></g></svg>
<svg class="abs" style="left:1612.0px;top:9.0px;overflow:visible" width="20" height="20" viewBox="0 0 20 20" fill="none" stroke="#33363f" stroke-width="1.5" stroke-linecap="round" stroke-linejoin="round"><g transform="translate(10 10) scale(0.92) translate(-10 -10)"><circle cx="6.6" cy="15.4" r="2.1"/><circle cx="13.4" cy="15.4" r="2.1"/><path d="M7.8 13.8 L13.6 6.4 M12.2 13.8 L6.4 6.4 M3.2 7 V3.4 H7 M13 3.4 H16.8 V7" stroke-width="1.5"/></g><circle cx="18.4" cy="3.0" r="2.8" fill="#de5a2c" stroke="none"/></svg>
<svg class="abs" style="left:1639.0px;top:9.0px;overflow:visible" width="20" height="20" viewBox="0 0 20 20" fill="none" stroke="#33363f" stroke-width="1.5" stroke-linecap="round" stroke-linejoin="round"><g transform="translate(10 10) scale(0.9) translate(-10 -10)"><rect x="3" y="2.6" width="9" height="8" /><path d="M5 5.2 H10 M5 7.6 H10 M7.5 4 V9 M4 13 L6 15.5"/><rect x="10" y="8.5" width="7.5" height="8.5" fill="#f3f4f9"/><text x="13.8" y="15.6" font-size="6.5" text-anchor="middle" fill="#33363f" stroke="none" font-family="Liberation Sans,sans-serif" font-weight="bold">A</text></g><circle cx="17.6" cy="2.8" r="2.8" fill="#de5a2c" stroke="none"/></svg>
<svg class="abs" style="left:1666.0px;top:9.0px;overflow:visible" width="20" height="20" viewBox="0 0 20 20" fill="none" stroke="#33363f" stroke-width="1.5" stroke-linecap="round" stroke-linejoin="round"><g transform="translate(10 10) scale(0.9) translate(-10 -10)"><path d="M2.8 6.5 V3.2 H6 M14 3.2 H17.2 V6.5 M2.8 13.5 V16.8 H6 M14 16.8 H17.2 V13.5" stroke-dasharray="2.4 1.2"/><path d="M6 6.6 H14 M10 4.6 V6.6 M7 8 L13 14.6 M13 8 L7 14.6" stroke-width="1.3"/></g></svg>
<svg class="abs" style="left:1693.0px;top:9.0px;overflow:visible" width="20" height="20" viewBox="0 0 20 20" fill="none" stroke="#33363f" stroke-width="1.5" stroke-linecap="round" stroke-linejoin="round"><g transform="translate(10 10) scale(0.92) translate(-10 -10)"><path d="M11 3 L17 9 L15.4 9.8 L13 9.4 L10.8 12.6 L11.2 15.4 L10 16.4 L3.6 10 L4.8 8.8 L7.4 9.2 L10.6 7 L10.2 4.4 Z M7 13.2 L3 17" stroke-width="1.4"/></g></svg>
<svg class="abs" style="left:1721.0px;top:9.0px;overflow:visible" width="20" height="20" viewBox="0 0 20 20" fill="none" stroke="#33363f" stroke-width="1.5" stroke-linecap="round" stroke-linejoin="round"><circle cx="10" cy="10" r="7.6"/><circle cx="10" cy="10" r="3.9" fill="#73768a" stroke="none"/></svg>
<svg class="abs" style="left:1747.0px;top:9.0px;overflow:visible" width="20" height="20" viewBox="0 0 20 20" fill="none" stroke="#33363f" stroke-width="1.5" stroke-linecap="round" stroke-linejoin="round"><path d="M10 3 V12.6 M5.8 8.6 L10 12.8 L14.2 8.6 M3 12.4 V16.6 H17 V12.4"/></svg>
<svg class="abs" style="left:1774.0px;top:9.0px;overflow:visible" width="20" height="20" viewBox="0 0 20 20" fill="none" stroke="#33363f" stroke-width="1.5" stroke-linecap="round" stroke-linejoin="round"><rect x="5.2" y="2.8" width="9.6" height="14.4" rx="0.8"/><path d="M5.2 13.2 H14.8 M9 15.3 H11" /><path d="M5.2 13.2 H14.8 V17.2 H5.2 Z" fill="none"/></svg>
<svg class="abs" style="left:1801.0px;top:9.0px;overflow:visible" width="20" height="20" viewBox="0 0 20 20" fill="none" stroke="#33363f" stroke-width="1.5" stroke-linecap="round" stroke-linejoin="round"><path d="M4.4 3.2 H15.6 V16.8 L10 12 L4.4 16.8 Z M6.6 6.4 H13.4"/></svg>
<div class="abs" style="left:1827px;top:12px;width:1px;height:14px;background:#d0d3db"></div>
<svg class="abs" style="left:1833.0px;top:9.0px;overflow:visible" width="20" height="20" viewBox="0 0 20 20" fill="none" stroke="#33363f" stroke-width="1.5" stroke-linecap="round" stroke-linejoin="round"><path d="M4 4 L16 16 M16 4 L4 16" stroke-width="1.4"/></svg>
<svg class="abs" style="left:1860.0px;top:9.0px;overflow:visible" width="20" height="20" viewBox="0 0 20 20" fill="none" stroke="#33363f" stroke-width="1.5" stroke-linecap="round" stroke-linejoin="round"><path d="M2.8 10.6 L7.6 15.6 L17.4 4.6" stroke-width="1.4"/></svg>
<div class="abs" style="left:1882px;top:10px;font-size:13px;line-height:18px;font-weight:500;color:#2d3038;letter-spacing:-.5px;white-space:nowrap">完成</div>
<div class="abs" style="left:1388px;top:40px;width:20px;height:30px;font-size:20.5px;line-height:32px;text-align:center;color:#555;font-family:'Liberation Sans',sans-serif;transform:scaleX(1.17)">A</div>
<div class="abs" style="left:1413px;top:45px;width:46px;height:19px;background:#fff;border:1px solid #dcdee4"></div>
<div class="abs" style="left:1418px;top:46px;font-size:13px;line-height:17px;color:#222;font-family:'Liberation Sans',sans-serif;letter-spacing:-.3px">20</div>
<div class="abs" style="left:1445px;top:52px;width:0;height:0;border:4.5px solid transparent;border-top:5.5px solid #333;border-bottom:0"></div>
<div class="abs" style="left:1472px;top:41px;width:28px;height:28px;background:#e200e6;border:1px solid #f0a0f0;box-shadow:inset 0 0 0 1px #f06af0"></div>
<div class="abs" style="left:1504px;top:41px;width:13px;height:12px;background:#000000;border:1px solid rgba(0,0,0,.12)"></div>
<div class="abs" style="left:1519px;top:41px;width:13px;height:12px;background:#828282;border:1px solid rgba(0,0,0,.12)"></div>
<div class="abs" style="left:1534px;top:41px;width:13px;height:12px;background:#820000;border:1px solid rgba(0,0,0,.12)"></div>
<div class="abs" style="left:1549px;top:41px;width:13px;height:12px;background:#ec8340;border:1px solid rgba(0,0,0,.12)"></div>
<div class="abs" style="left:1564px;top:41px;width:13px;height:12px;background:#389638;border:1px solid rgba(0,0,0,.12)"></div>
<div class="abs" style="left:1579px;top:41px;width:13px;height:12px;background:#3d57cf;border:1px solid rgba(0,0,0,.12)"></div>
<div class="abs" style="left:1594px;top:41px;width:13px;height:12px;background:#820082;border:1px solid rgba(0,0,0,.12)"></div>
<div class="abs" style="left:1609px;top:41px;width:13px;height:12px;background:#12a192;border:1px solid rgba(0,0,0,.12)"></div>
<div class="abs" style="left:1504px;top:56px;width:13px;height:12px;background:#ffffff;border:1px solid rgba(0,0,0,.14)"></div>
<div class="abs" style="left:1519px;top:56px;width:13px;height:12px;background:#c0c0c0;border:1px solid rgba(0,0,0,.14)"></div>
<div class="abs" style="left:1534px;top:56px;width:13px;height:12px;background:#ea2238;border:1px solid rgba(0,0,0,.14)"></div>
<div class="abs" style="left:1549px;top:56px;width:13px;height:12px;background:#ffff1e;border:1px solid rgba(0,0,0,.14)"></div>
<div class="abs" style="left:1564px;top:56px;width:13px;height:12px;background:#8ad614;border:1px solid rgba(0,0,0,.14)"></div>
<div class="abs" style="left:1579px;top:56px;width:13px;height:12px;background:#338fe0;border:1px solid rgba(0,0,0,.14)"></div>
<div class="abs" style="left:1594px;top:56px;width:13px;height:12px;background:#e210e2;border:1px solid rgba(0,0,0,.14)"></div>
<div class="abs" style="left:1609px;top:56px;width:13px;height:12px;background:#2ee8d2;border:1px solid rgba(0,0,0,.14)"></div>
<div class="abs" style="left:668px;top:299px;width:584px;height:86px;border:2.5px solid #c1102b;background:#fff"></div>
<div class="abs" style="left:674.5px;top:309px;font-size:27px;line-height:35px;color:#cf10d5;white-space:nowrap;letter-spacing:.19px;word-spacing:1px">管理 可以根据用户发布的失踪信息帮忙寻回<br>寻回的宠物可以发布在寻宠广场，让</div>
<svg class="abs" style="left:696px;top:323px" width="10" height="18" viewBox="0 0 10 18"><path d="M2 1.5 H4 Q5 1.5 5 3 V15 Q5 16.5 4 16.5 H2 M8 1.5 H6 Q5 1.5 5 3 M5 15 Q5 16.5 6 16.5 H8 M3.5 9 H6.5" stroke="#222" stroke-width="1.1" fill="none"/></svg>
<div class="abs" style="left:1108.5px;top:376px;width:350.5px;height:57px;background:linear-gradient(90deg,#fff 0%,#fff 78%,#fbf3fb 92%,#fff7ee 100%);border:1px solid #b3c8dc;border-radius:3px;box-shadow:0 1px 3px rgba(60,100,150,.18)"></div>
<div class="abs" style="left:1120px;top:381px;font-size:16px;line-height:20px;color:#3c78b4;font-family:'Liberation Sans',sans-serif;letter-spacing:-.55px;white-space:nowrap">yong'hu</div>
<div class="abs" style="left:1172.3px;top:380.5px;width:1.2px;height:17px;background:#e05030"></div>
<div class="abs" style="left:1120px;top:404.5px;font-size:17.3px;line-height:22px;color:#e0452d;white-space:nowrap;letter-spacing:.7px"><span style="font-size:14px;letter-spacing:0;color:#e88070;display:inline-block;width:11.3px;font-family:'Liberation Sans',sans-serif">1</span>用户</div>
<div class="abs" style="left:1181px;top:404.5px;font-size:17.3px;line-height:22px;color:#3b77b5;white-space:nowrap;letter-spacing:.7px"><span style="font-size:14px;letter-spacing:0;color:#7aa3cf;display:inline-block;width:11.3px;font-family:'Liberation Sans',sans-serif">2</span>拥护</div>
<div class="abs" style="left:1242px;top:404.5px;font-size:17.3px;line-height:22px;color:#3b77b5;white-space:nowrap;letter-spacing:.7px"><span style="font-size:14px;letter-spacing:0;color:#7aa3cf;display:inline-block;width:11.3px;font-family:'Liberation Sans',sans-serif">3</span>永湖</div>
<div class="abs" style="left:1303px;top:404.5px;font-size:17.3px;line-height:22px;color:#3b77b5;white-space:nowrap;letter-spacing:.7px"><span style="font-size:14px;letter-spacing:0;color:#7aa3cf;display:inline-block;width:11.3px;font-family:'Liberation Sans',sans-serif">4</span>拥湖</div>
<div class="abs" style="left:1364px;top:404.5px;font-size:17.3px;line-height:22px;color:#3b77b5;white-space:nowrap;letter-spacing:.7px"><span style="font-size:14px;letter-spacing:0;color:#7aa3cf;display:inline-block;width:11.3px;font-family:'Liberation Sans',sans-serif">5</span>用</div>
<svg class="abs" style="left:1409px;top:409px" width="44" height="16" viewBox="0 0 44 16" fill="none" stroke-width="1.25"><path d="M8 4 L4.6 8 L8 12" stroke="#e0e7ef"/><path d="M18.4 4 L21.8 8 L18.4 12" stroke="#4a80b8"/><path d="M32.4 6.6 L36 10 L39.6 6.6" stroke="#4a80b8"/></svg>
<svg class="abs" style="left:1428px;top:379px" width="28" height="22" viewBox="0 0 28 22"><defs><filter id="mb" x="-20%" y="-20%" width="140%" height="140%"><feGaussianBlur stdDeviation=".5"/></filter></defs><g filter="url(#mb)"><circle cx="14" cy="11" r="7.6" fill="#fff"/><ellipse cx="12" cy="8" rx="6.8" ry="3" fill="#e0622c" transform="rotate(-9 12 8)"/><ellipse cx="14.5" cy="7.2" rx="2" ry="1.2" fill="#f08048"/><ellipse cx="10" cy="12.2" rx="1.9" ry="0.9" fill="#3a2418" transform="rotate(-12 10 12.2)"/><path d="M15.4 12 L14.4 13.6" stroke="#555" stroke-width=".8"/><circle cx="23" cy="6.3" r="1.7" fill="#ece65a"/></g></svg>
<svg class="abs" style="left:1450px;top:790px" width="380" height="100" viewBox="0 0 380 100">
<defs><linearGradient id="wg" gradientUnits="userSpaceOnUse" x1="0" y1="20" x2="0" y2="85"><stop offset="0" stop-color="#dfe9fb"/><stop offset="1" stop-color="#c4d8f8"/></linearGradient>
<linearGradient id="wg2" gradientUnits="userSpaceOnUse" x1="11" y1="80" x2="65" y2="55"><stop offset="0" stop-color="#d3e2fa"/><stop offset="1" stop-color="#eef3fd"/></linearGradient></defs>
<path d="M11 28 V80" stroke="url(#wg)" stroke-width="14" stroke-linecap="round" fill="none"/>
<path d="M11 80 L65 55" stroke="url(#wg2)" stroke-width="14" stroke-linecap="round" fill="none"/>
<path d="M11 13 L65 55" stroke="#fff" stroke-width="15" stroke-linecap="round" fill="none"/>
<text x="104" y="70" font-size="59" font-weight="bold" fill="#fff" font-family="Liberation Sans,Noto Sans CJK SC,sans-serif" textLength="262" lengthAdjust="spacingAndGlyphs">QV剪辑</text>
</svg>
<div id="edgeB" class="abs"></div><div id="edgeL" class="abs"></div><div id="edgeL2" class="abs"></div><div id="edgeR" class="abs"></div>
</body></html>
